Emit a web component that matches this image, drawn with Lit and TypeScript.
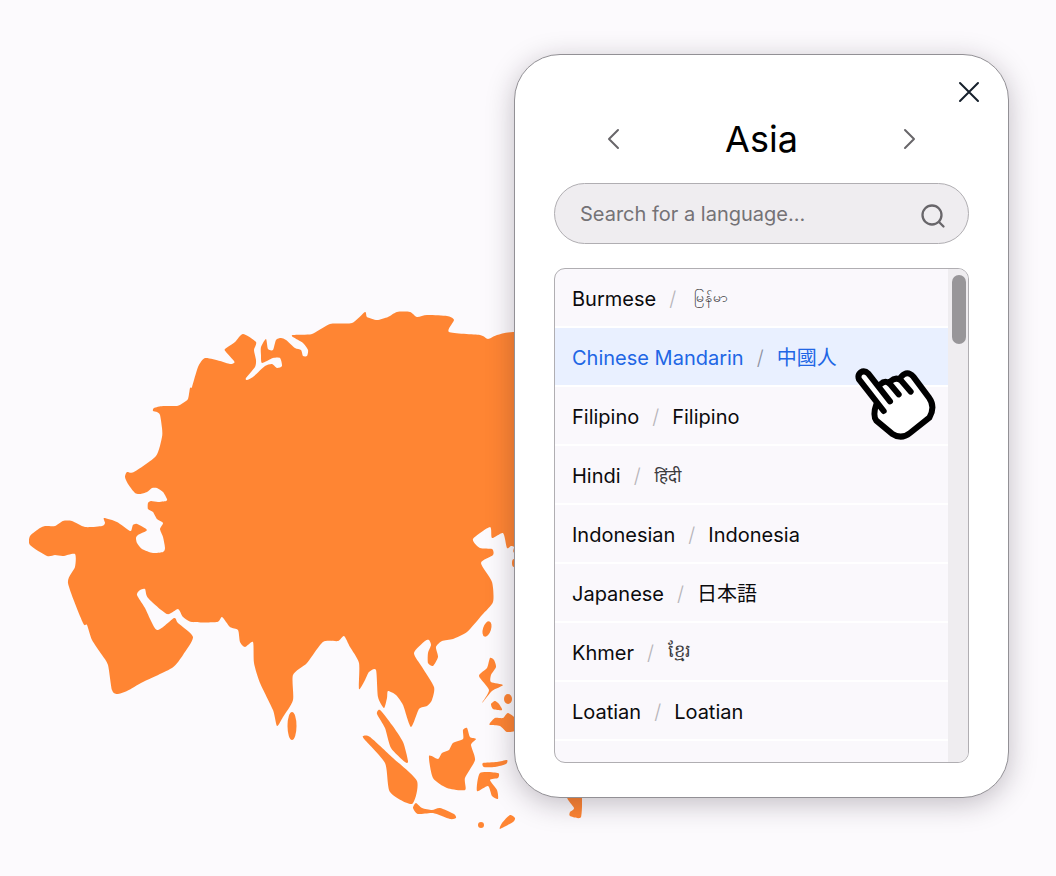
import { LitElement, html, css, svg } from "lit";
import { customElement, state, property } from "lit/decorators.js";
import { classMap } from "lit/directives/class-map.js";

type Point = [number, number];

interface Language {
  name: string;
  native: string;
  lang: string;
  script?: string;
}

const LANGUAGES: Language[] = [
  { name: "Burmese", native: "မြန်မာ", lang: "my", script: "burmese" },
  { name: "Chinese Mandarin", native: "中國人", lang: "zh" },
  { name: "Filipino", native: "Filipino", lang: "fil" },
  { name: "Hindi", native: "हिंदी", lang: "hi", script: "hindi" },
  { name: "Indonesian", native: "Indonesia", lang: "id" },
  { name: "Japanese", native: "日本語", lang: "ja" },
  { name: "Khmer", native: "ខ្មែរ", lang: "km", script: "khmer" },
  { name: "Loatian", native: "Loatian", lang: "lo" },
];

// Coastlines, one closed outline per entry, as "x,y" pairs.
const COASTS: string[] = [
  // Mainland
  `30,536 40,528 45,526 55,526 63,521 72,521 85,527 102,526 105,523 104,518 117,522 130,531 132,528 133,525
   137,524 147,530 138,535 136,538 137,543 142,549 153,553 163,552 165,548 163,537 160,529 163,523 157,519
   153,512 148,509 148,503 151,501 158,502 166,501 167,499 163,492 157,488 152,488 147,492 140,494 135,493
   128,484 125,477 127,472 134,472 156,456 162,437 162,428 160,415 157,412 153,411 154,408 163,406 177,406
   183,403 188,399 190,388 192,387 198,367 205,358 220,361 230,364 234,363 234,361 226,352 225,349 235,342
   243,334 256,342 254,350 256,360 255,367 246,378 247,380 253,377 265,366 272,364 277,368 282,366 280,358
   273,358 262,363 261,355 261,347 266,339 268,349 273,350 276,340 281,338 286,340 295,348 301,350 303,356
   307,356 308,350 303,343 293,337 293,335 312,334 330,324 352,323 365,312 367,317 377,320 388,317 397,312
   410,312 417,317 427,315 447,316 454,320 449,332 480,335 488,339 497,335 513,332 560,332 560,545 516,553
   514,547 511,546 507,548 503,533 492,538 490,527 473,539 480,548 492,549 493,555 481,563 492,582 493,602
   482,615 467,632 453,639 442,641 436,647 438,657 433,666 428,663 428,653 431,645 429,640 425,641 414,653
   422,667 434,687 432,700 427,706 419,709 411,727 403,705 396,695 388,691 387,698 384,708 378,697 376,670
   369,672 365,680 359,689 359,663 350,647 344,636 338,641 323,642 307,663 293,675 293,700 283,717 277,726
   273,710 260,683 254,663 253,642 245,647 240,642 238,630 230,627 222,617 217,622 192,622 183,617 178,609
   167,614 148,598 145,589 140,590 137,595 145,608 157,630 174,618 178,623 193,637 183,655 172,668 143,682
   127,691 117,694 112,690 108,665 102,655 92,640 87,625 83,623 68,583 75,567 75,554 63,556 55,555 47,556
   30,545`,
  // Philippines
  `490,658 494,660 496,667 491,675 491,682 503,685 492,691 482,703 489,690 479,676 487,668`,
  `491,704 495,701 499,704 502,710 493,709`,
  `490,723 495,718 503,718 508,713 517,720 517,730 507,732 500,726 490,725`,
  // Malay peninsula, Sumatra, Java
  `380,710 377,714 385,728 391,748 405,762 408,761 403,742 392,725`,
  `363,736 365,740 385,763 390,792 412,804 417,781 393,758 370,737`,
  `416,803 413,808 418,814 433,813 450,819 456,818 454,814 440,808 432,810 422,808`,
  // Borneo
  `429,756 438,759 442,753 449,750 453,743 463,739 463,730 467,728 470,737 476,739 471,745 475,760 465,778
   465,790 447,788 433,778`,
  // Sulawesi
  `483,763 497,762 507,760 506,764 495,767 484,767`,
  `480,773 498,773 498,778 490,780 497,790 498,799 492,796 488,786 477,791`,
  // Timor
  `515,818 510,815 502,823 500,829 513,822`,
  // Papua
  `567,797 574,808 570,812 570,816 581,817 581,790`,
];

// Closed spline through every point, tight enough to keep capes sharp.
function coastPath(source: string): string {
  const pts: Point[] = source.trim().split(/\s+/).map((p) => p.split(",").map(Number) as Point);
  const n = pts.length;
  const k = 1 / 9;
  let d = `M${pts[0][0]} ${pts[0][1]}`;
  for (let i = 0; i < n; i++) {
    const a = pts[(i - 1 + n) % n];
    const b = pts[i];
    const c = pts[(i + 1) % n];
    const e = pts[(i + 2) % n];
    d += `C${b[0] + (c[0] - a[0]) * k} ${b[1] + (c[1] - a[1]) * k} ${c[0] - (e[0] - b[0]) * k} ${c[1] - (e[1] - b[1]) * k} ${c[0]} ${c[1]}`;
  }
  return d + "Z";
}

@customElement("asia-map")
export class AsiaMap extends LitElement {
  static styles = css`
    :host {
      display: block;
    }
    .map {
      display: block;
      width: 100%;
      fill: #ff8533;
    }
  `;

  render() {
    return html`
      <svg class="map" viewBox="29 311 553 520" role="img" aria-label="Map of Asia">
        ${COASTS.map((c) => svg`<path d=${coastPath(c)} />`)}
        <ellipse cx="292" cy="726" rx="4.5" ry="14" />
        <ellipse cx="487" cy="629" rx="4" ry="8" transform="rotate(18 487 629)" />
        <ellipse cx="508" cy="699" rx="4" ry="5" />
        <ellipse cx="514" cy="563" rx="2" ry="4" />
        <circle cx="481" cy="825" r="3" />
      </svg>
    `;
  }
}

@customElement("language-list")
export class LanguageList extends LitElement {
  @property({ attribute: false }) languages: Language[] = [];
  @property() selected = "";

  static styles = css`
    :host {
      display: block;
    }
    .frame {
      display: flex;
      border: 1px solid #b0aeb2;
      border-radius: 11px;
      background: #faf8fc;
      overflow: hidden;
    }
    .list {
      flex: 1;
      min-width: 0;
      margin: 0;
      padding: 0 0 21px;
      list-style: none;
    }
    .item {
      border-bottom: 2px solid #ffffff;
    }
    .row {
      display: flex;
      align-items: center;
      gap: 13px;
      width: 100%;
      height: 57px;
      padding: 3px 17px 0;
      border: 0;
      background: transparent;
      color: #0b0b0d;
      font: 400 20px/28px Inter, "Noto Sans", "Noto Sans CJK JP", sans-serif;
      text-align: left;
      white-space: nowrap;
      cursor: pointer;
    }
    .row.active {
      background: #e9f0ff;
      color: #2166e5;
    }
    .slash {
      color: #b6b4b9;
      font-weight: 300;
    }
    .active .slash {
      color: #8d91a0;
    }
    .burmese,
    .khmer,
    .hindi {
      color: #3c3b3e;
    }
    .burmese {
      padding: 0 0 4px 5px;
      font-size: 14px;
    }
    .khmer {
      padding: 0 0 4px 1px;
      font-size: 18px;
    }
    .hindi {
      padding-left: 1px;
      font-size: 17px;
    }
    .track {
      flex: none;
      width: 20px;
      box-sizing: border-box;
      padding: 6px 2px 6px 4px;
      background: #efedf0;
    }
    .thumb {
      height: 69px;
      border-radius: 7px;
      background: #989699;
    }
  `;

  private pick(name: string) {
    this.dispatchEvent(new CustomEvent("pick", { detail: name }));
  }

  render() {
    return html`
      <div class="frame">
        <ul class="list">
          ${this.languages.map(
            (l) => html`
              <li class="item">
                <button
                  type="button"
                  class=${classMap({ row: true, active: l.name === this.selected })}
                  @click=${() => this.pick(l.name)}
                >
                  <span>${l.name}</span>
                  <span class="slash">/</span>
                  <span class=${l.script ?? "plain"} lang=${l.lang}>${l.native}</span>
                </button>
              </li>
            `
          )}
        </ul>
        <div class="track"><div class="thumb"></div></div>
      </div>
    `;
  }
}

@customElement("app-root")
export class AppRoot extends LitElement {
  @state() private selected = "Chinese Mandarin";

  static styles = css`
    :host {
      display: block;
      min-height: 100vh;
      background: #fcfafd;
      font-family: Inter, "Noto Sans", sans-serif;
    }
    .stage {
      display: grid;
      grid-template-columns: minmax(0, 1fr);
      align-items: start;
      padding: 54px 47px 0 29px;
    }
    .land {
      grid-area: 1 / 1;
      width: 100%;
      max-width: 553px;
      margin-top: 257px;
    }
    .card {
      position: relative;
      grid-area: 1 / 1;
      justify-self: end;
      box-sizing: border-box;
      width: 100%;
      max-width: 495px;
      padding: 23px 39px 34px;
      border: 1px solid #929095;
      border-radius: 46px;
      background: #ffffff;
      box-shadow: 0 6px 28px rgba(30, 20, 35, 0.26);
    }
    .top {
      display: flex;
      justify-content: flex-end;
    }
    .icon-btn {
      display: flex;
      padding: 0;
      border: 0;
      background: transparent;
      cursor: pointer;
    }
    .close {
      margin-right: -14px;
    }
    .icon {
      display: block;
      fill: none;
      stroke: #68666a;
      stroke-width: 2;
      stroke-linecap: round;
      stroke-linejoin: round;
    }
    .close .icon {
      stroke: #16202c;
    }
    .find .icon {
      stroke-width: 2.3;
    }
    .nav {
      display: flex;
      align-items: center;
      justify-content: space-between;
      height: 48px;
      margin-top: 9px;
      padding: 0 48px;
    }
    .title {
      margin: 0;
      color: #000000;
      font-size: 36px;
      line-height: 48px;
      font-weight: 400;
    }
    .search {
      display: flex;
      align-items: center;
      height: 59px;
      margin-top: 20px;
      padding: 0 22px 0 25px;
      border: 1px solid #b0aeb2;
      border-radius: 31px;
      background: #efedf0;
    }
    .field {
      flex: 1;
      min-width: 0;
      padding: 0;
      border: 0;
      outline: 0;
      background: transparent;
      color: #222222;
      font: 400 20px/28px Inter, sans-serif;
    }
    .field::placeholder {
      color: #747276;
      opacity: 1;
    }
    .find {
      padding-top: 5px;
    }
    .languages {
      margin-top: 24px;
    }
    .cursor {
      position: absolute;
      top: 311px;
      right: 71px;
      pointer-events: none;
    }
    .hand {
      fill: #ffffff;
    }
    .lines {
      fill: none;
      stroke: #000000;
      stroke-width: 18;
      stroke-linecap: round;
      stroke-linejoin: round;
    }
  `;

  render() {
    return html`
      <main class="stage">
        <asia-map class="land"></asia-map>
        <section class="card" aria-label="Choose a language">
          <div class="top">
            <button type="button" class="icon-btn close" aria-label="Close">
              <svg class="icon" width="28" height="28" viewBox="0 0 28 28"><path d="M5 5L23 23M23 5L5 23" /></svg>
            </button>
          </div>
          <div class="nav">
            <button type="button" class="icon-btn" aria-label="Previous region">
              <svg class="icon" width="24" height="24" viewBox="0 0 24 24"><path d="M16 3L7 12L16 21" /></svg>
            </button>
            <h1 class="title">Asia</h1>
            <button type="button" class="icon-btn" aria-label="Next region">
              <svg class="icon" width="24" height="24" viewBox="0 0 24 24"><path d="M8 3L17 12L8 21" /></svg>
            </button>
          </div>
          <form class="search" @submit=${(e: Event) => e.preventDefault()}>
            <input class="field" type="text" aria-label="Search for a language" placeholder="Search for a language..." />
            <button type="submit" class="icon-btn find" aria-label="Search">
              <svg class="icon" width="26" height="26" viewBox="0 0 26 26">
                <circle cx="12" cy="12" r="9.5" />
                <path d="M19 19L23.5 23.5" />
              </svg>
            </button>
          </form>
          <language-list
            class="languages"
            .languages=${LANGUAGES}
            .selected=${this.selected}
            @pick=${(e: CustomEvent<string>) => (this.selected = e.detail)}
          ></language-list>
          <svg class="cursor" width="84" height="75" viewBox="159 318 252 225" aria-hidden="true">
            <path
              class="hand"
              d="M180 360Q172 346 182 338Q193 332 203 342L238 384Q252 358 274 366Q286 350 302 356Q320 328 340 350L387 413Q408 441 389 473L330 519Q304 540 276 521L229 482Q217 466 228 432Z"
            />
            <path
              class="lines"
              d="M251 453L177 358Q172 345 182 337Q194 330 205 341L270 424M241 373Q257 358 271 373L296 403M271 364Q287 349 303 361L332 395M304 350Q322 329 340 350L387 413Q407 441 388 473L330 519Q304 540 276 521L229 482Q217 466 230 430"
            />
          </svg>
        </section>
      </main>
    `;
  }
}
